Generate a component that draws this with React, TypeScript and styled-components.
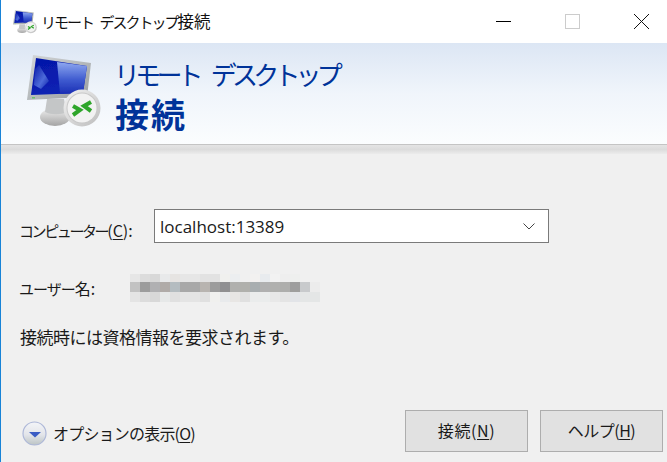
import React from "react";
import styled, { createGlobalStyle } from "styled-components";

const JP = `"Noto Sans CJK JP", "Noto Sans", sans-serif`;

const GlobalStyle = createGlobalStyle`
    html, body {
        margin: 0;
        padding: 0;
        overflow: hidden;
    }
`;

const Window = styled.div`
    width: 667px;
    height: 462px;
    box-sizing: border-box;
    border-left: 1px solid #1883d7;
    display: flex;
    flex-direction: column;
    background: #f0f0f0;
    font-family: ${JP};
    font-size: 16px;
    color: #1a1a1a;
`;

const TitleBar = styled.div`
    height: 43px;
    flex: none;
    display: flex;
    align-items: center;
    background: #fff;
    padding-left: 12px;
`;

const TitleText = styled.div`
    margin: -2px 0 0 4px;
    font-size: 16.5px;
    color: #111;
    flex: 1;
    white-space: pre;
`;

const Kana = styled.span<{ $size: number; $spacing: number }>`
    font-size: ${({ $size }) => $size}px;
    letter-spacing: ${({ $spacing }) => $spacing}px;
`;

const WindowControls = styled.div`
    display: flex;
    align-items: center;
    gap: 54px;
    padding-right: 18px;
`;

const Banner = styled.div`
    height: 101px;
    flex: none;
    display: flex;
    align-items: flex-start;
    padding: 12px 0 0 26px;
    box-sizing: border-box;
    background: linear-gradient(180deg, #dce6f4 0%, #f0f5fb 50%, #fbfdfe 100%);
`;

const BannerText = styled.div`
    margin-left: 14px;
    color: #003399;
    display: flex;
    flex-direction: column;
`;

const BannerTitle = styled.div`
    font-size: 26px;
    line-height: 40px;
    letter-spacing: -4.8px;
    word-spacing: 11px;
    margin: -1px 0 0 -1px;
    white-space: pre;
`;

const BannerStrong = styled.div`
    font-size: 34px;
    font-weight: 700;
    line-height: 44px;
    letter-spacing: 2px;
    margin-top: -2px;
`;

const Divider = styled.div`
    height: 10px;
    flex: none;
    box-sizing: border-box;
    border-top: 1px solid #c4c4c4;
    background: linear-gradient(180deg, #e4e4e4 0%, #dcdcdc 50%, #ececec 100%);
`;

const Form = styled.div`
    flex: 1;
    display: flex;
    flex-direction: column;
    padding: 55px 0 10px 19px;
`;

const Row = styled.div<{ $top?: number }>`
    display: flex;
    align-items: center;
    margin-top: ${({ $top }) => $top ?? 0}px;
`;

const Label = styled.div<{ $width: number; $shift?: number }>`
    width: ${({ $width }) => $width}px;
    flex: none;
    margin-left: -1px;
    padding-top: ${({ $shift }) => $shift ?? 0}px;
    white-space: nowrap;
`;

const Mnemonic = styled.span`
    text-decoration: underline;
    text-underline-offset: 2px;
`;

const ComboBox = styled.div`
    width: 395px;
    height: 34px;
    box-sizing: border-box;
    border: 1px solid #7a7a7a;
    background: #fff;
    display: flex;
    align-items: center;
    justify-content: space-between;
    padding: 0 13px 0 5px;
    font-family: "Open Sans", "Noto Sans", sans-serif;
    font-size: 17px;
`;

const Message = styled.div`
    font-size: 17px;
    letter-spacing: -0.5px;
`;

const Footer = styled.div`
    margin-top: auto;
    display: flex;
    align-items: center;
    justify-content: space-between;
    padding-right: 4px;
`;

const OptionsToggle = styled.div`
    display: flex;
    align-items: center;
    gap: 6px;
    margin: 4px 0 0 2px;
    letter-spacing: -0.8px;
`;

const Buttons = styled.div`
    display: flex;
    gap: 12px;
`;

const Button = styled.div<{ $spacing: number }>`
    width: 123px;
    height: 42px;
    box-sizing: border-box;
    border: 1px solid #adadad;
    background: #e1e1e1;
    display: flex;
    align-items: center;
    justify-content: center;
    padding-bottom: 2px;
    letter-spacing: ${({ $spacing }) => $spacing}px;
`;

const MosaicGrid = styled.svg`
    display: block;
    flex: none;
`;

const MOSAIC = [
    ["#e6e6e6", "#dcdcdc", "#d8d8d8", "#e8e9ea", "#e6e4e2", "#e6e6e6", "#e6e6e6", "#e2e2e2", "#e2e2e2", "#f0f0ee", "#eceef0", "#f0f0f0", "#f2f1f0", "#e8ebee", "#f2f2f2", "#eeeeee", "#eeefee", "#f0f0f0", "#f0f0f0"],
    ["#c2c2c2", "#9c9c9c", "#b0b0b2", "#b0aba8", "#b4bcc0", "#a8a8a8", "#a8a8a8", "#b8b4b0", "#9c9c9c", "#909092", "#b0b0ae", "#b0b0ac", "#a8aeb0", "#b0b0b0", "#b0b0ae", "#aeaeac", "#9e9e9e", "#c8cacc", "#ececec"],
    ["#e4e4e4", "#dcdcdc", "#d8d8d8", "#e6e8e8", "#e0e0e0", "#e4e4e4", "#e4e4e4", "#e0e0e0", "#f0f0ee", "#e8eaec", "#e8e6e4", "#e0e0e0", "#eaecec", "#eaecec", "#e8e8e8", "#e4e4e4", "#e2e4e8", "#e4e6e6", "#e4e6e6"],
];

const Mosaic: React.FC = () => (
    <MosaicGrid width={190} height={28} viewBox="0 0 190 28" shapeRendering="crispEdges">
        {MOSAIC.map((row, r) =>
            row.map((fill, c) => (
                <rect key={`${r}-${c}`} x={c * 10} y={[0, 8, 18][r]} width={10} height={[8, 10, 10][r]} fill={fill} />
            ))
        )}
    </MosaicGrid>
);

const MonitorIcon: React.FC<{ size: number }> = ({ size }) => (
    <svg width={size} height={size} viewBox="0 0 74 74" style={{ flex: "none", display: "block" }}>
        <defs>
            <linearGradient id="bezel" x1="0" y1="0" x2="1" y2="1">
                <stop offset="0" stopColor="#d4d7d9" />
                <stop offset="0.5" stopColor="#b6babc" />
                <stop offset="1" stopColor="#989c9e" />
            </linearGradient>
            <linearGradient id="screen" x1="0" y1="0" x2="0.3" y2="1">
                <stop offset="0" stopColor="#0516a8" />
                <stop offset="1" stopColor="#0a22b4" />
            </linearGradient>
            <linearGradient id="glare" x1="0" y1="0" x2="0" y2="1">
                <stop offset="0" stopColor="#8fa8f0" />
                <stop offset="0.55" stopColor="#3f5cd0" />
                <stop offset="1" stopColor="#1a2eb4" />
            </linearGradient>
            <linearGradient id="streak" x1="0" y1="0" x2="1" y2="1">
                <stop offset="0" stopColor="#0a1aa8" />
                <stop offset="0.6" stopColor="#5f7fe4" />
                <stop offset="1" stopColor="#0a1aa8" />
            </linearGradient>
            <linearGradient id="foot" x1="0" y1="0" x2="0" y2="1">
                <stop offset="0" stopColor="#f0f0f0" />
                <stop offset="1" stopColor="#a4a4a4" />
            </linearGradient>
            <linearGradient id="badge" x1="0" y1="0" x2="1" y2="1">
                <stop offset="0" stopColor="#f4f4f4" />
                <stop offset="1" stopColor="#bcbcbc" />
            </linearGradient>
            <filter id="soft" x="-5%" y="-5%" width="110%" height="110%">
                <feGaussianBlur stdDeviation="0.45" />
            </filter>
        </defs>
        <g filter="url(#soft)">
            <ellipse cx="28" cy="62" rx="15" ry="9" fill="url(#foot)" />
            <path d="M20 44h17l3 13c-6 3-16 3-22 0z" fill="#c4c6c7" />
            <path d="M6 0 64 8 60 42 0 45z" fill="url(#bezel)" />
            <path d="M9 3 60 11 56 38 4 40z" fill="url(#screen)" />
            <path d="M30 7 60 11 56 38 33 39z" fill="url(#glare)" />
            <path d="M8 14 12 10 22 26 14 34 7 30z" fill="url(#streak)" opacity="0.8" />
            <rect x="5" y="42" width="3" height="1.500" fill="#6cc070" />
            <circle cx="55" cy="53" r="18.500" fill="url(#badge)" />
            <circle cx="55" cy="53" r="15.500" fill="#c8c8c8" />
            <circle cx="55" cy="53" r="14.500" fill="#f2f2f2" />
            <path d="M46 51 53 55 46 60M64 47 57 51 64 56" fill="none" stroke="#2fa52a" strokeWidth="4" />
        </g>
    </svg>
);

const ChevronCircle: React.FC = () => (
    <svg width={25} height={25} viewBox="0 0 25 25" style={{ flex: "none", display: "block" }}>
        <defs>
            <linearGradient id="orb" x1="0" y1="0" x2="0" y2="1">
                <stop offset="0" stopColor="#f4f5f8" />
                <stop offset="0.55" stopColor="#e3e5ea" />
                <stop offset="1" stopColor="#bcc4c4" />
            </linearGradient>
        </defs>
        <circle cx="12.500" cy="12.500" r="11.500" fill="url(#orb)" stroke="#aeb8d8" strokeWidth="1.2" />
        <path d="M7 11h12l-6 5.500z" fill="#3a5cc4" />
    </svg>
);

const App: React.FC = () => {
    return (
        <Window>
            <GlobalStyle />
            <TitleBar>
                <MonitorIcon size={24} />
                <TitleText>
                    <Kana $size={15} $spacing={-2}>リモート</Kana>
                    <Kana $size={15} $spacing={3}> </Kana>
                    <Kana $size={15} $spacing={-2}>デスクトップ</Kana>
                    接続
                </TitleText>
                <WindowControls>
                    <svg width={15} height={15} viewBox="0 0 15 15">
                        <path d="M0 7.500h15" stroke="#000" strokeWidth="1" />
                    </svg>
                    <svg width={15} height={15} viewBox="0 0 15 15">
                        <rect x="0.500" y="0.500" width="14" height="14" fill="none" stroke="#cccccc" />
                    </svg>
                    <svg width={15} height={15} viewBox="0 0 15 15">
                        <path d="M0 0 15 15M15 0 0 15" stroke="#111" strokeWidth="1" />
                    </svg>
                </WindowControls>
            </TitleBar>
            <Banner>
                <MonitorIcon size={74} />
                <BannerText>
                    <BannerTitle>リモート デスクトップ</BannerTitle>
                    <BannerStrong>接続</BannerStrong>
                </BannerText>
            </Banner>
            <Divider />
            <Form>
                <Row>
                    <Label $width={135} $shift={8}>
                        <Kana $size={15} $spacing={-2.4}>コンピューター</Kana>(<Mnemonic>C</Mnemonic>):
                    </Label>
                    <ComboBox>
                        localhost:13389
                        <svg width={12} height={7} viewBox="0 0 12 7">
                            <path d="M0.500 0.500 6 6 11.500 0.500" fill="none" stroke="#444" strokeWidth="1" />
                        </svg>
                    </ComboBox>
                </Row>
                <Row $top={31}>
                    <Label $width={111}>
                        <Kana $size={15} $spacing={-1}>ユーザー</Kana>名:
                    </Label>
                    <Mosaic />
                </Row>
                <Row $top={22}>
                    <Message>接続時には資格情報を要求されます。</Message>
                </Row>
                <Footer>
                    <OptionsToggle>
                        <ChevronCircle />
                        <span>
                            オプションの表示(<Mnemonic>O</Mnemonic>)
                        </span>
                    </OptionsToggle>
                    <Buttons>
                        <Button $spacing={0.6}>
                            接続(<Mnemonic>N</Mnemonic>)
                        </Button>
                        <Button $spacing={-0.5}>
                            ヘルプ(<Mnemonic>H</Mnemonic>)
                        </Button>
                    </Buttons>
                </Footer>
            </Form>
        </Window>
    );
};

export default App;
